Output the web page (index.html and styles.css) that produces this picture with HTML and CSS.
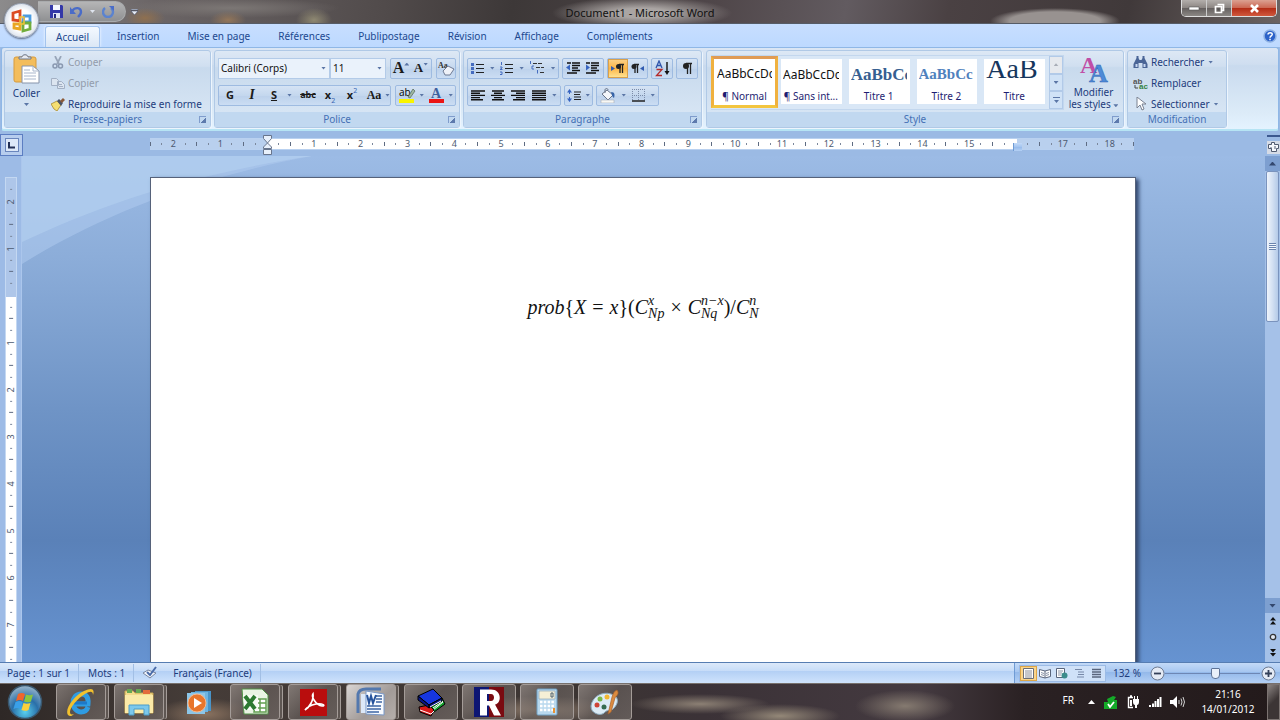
FILE: index.html
```html
<!DOCTYPE html>
<html lang="fr">
<head>
<meta charset="utf-8">
<title>Document1 - Microsoft Word</title>
<link rel="stylesheet" href="styles.css">
</head>
<body>
<header class="titlebar">
  <div class="quick">
    <button class="plain" aria-label="Enregistrer"><svg width="13" height="13" viewBox="0 0 13 13"><path d="M0 0h12l1 1v12H0z" fill="#3438a8"/><path d="M3 0h7v5H3z" fill="#f4f6ff"/><path d="M3 8h7v5H3z" fill="#dfe4f4"/><path d="M4 9h2v4H4z" fill="#222880"/></svg></button>
    <button class="plain" aria-label="Annuler"><svg width="13" height="12" viewBox="0 0 13 12"><path d="M2 5C5 1 11 1 11 6c0 2-1 3-3 5" fill="none" stroke="#4a6cc8" stroke-width="2.4"/><path d="M0 1v7h6z" fill="#4a6cc8"/></svg></button>
    <i class="caret pale"></i>
    <button class="plain" aria-label="Rétablir"><svg width="13" height="12" viewBox="0 0 13 12"><path d="M3 2a5 5 0 1 0 6 0" fill="none" stroke="#5b83cf" stroke-width="2.4"/><path d="M7 0h5v5z" fill="#4a6cc8"/></svg></button>
  </div>
  <button class="plain quick-more" aria-label="Personnaliser"><svg width="7" height="6" viewBox="0 0 7 6"><path d="M0 0h7v1H0zM0 2h7L3.500 6z" fill="#e8edf6" stroke="#333c58" stroke-width=".5"/></svg></button>
  <h1>Document1 - Microsoft Word</h1>
  <div class="window-buttons">
    <button aria-label="Réduire"><svg width="12" height="5" viewBox="0 0 12 5"><path d="M1 1h10v3H1z" fill="#fff" stroke="#555" stroke-width=".6"/></svg></button>
    <button aria-label="Niveau inférieur"><svg width="11" height="11" viewBox="0 0 11 11"><path d="M3.500 1.500h6v6h-2M1.500 3.500h6v6h-6z" fill="none" stroke="#fff" stroke-width="1.700"/><path d="M3.500 5.500h2v2h-2z" fill="#555"/></svg></button>
    <button class="close" aria-label="Fermer"><svg width="11" height="9" viewBox="0 0 11 9"><path d="M2 1l7 7M9 1L2 8" stroke="#fff" stroke-width="2.600"/></svg></button>
  </div>
  <button class="office" aria-label="Bouton Office"><svg width="24" height="24" viewBox="0 0 24 24" fill="none" stroke-width="2.800"><path d="M3 4l7-2v10l-7-1z" stroke="#dc4b22"/><path d="M14 7h6v6h-7z" stroke="#4b9be0"/><path d="M4 15h6v5l-6-1z" stroke="#e9a620"/><path d="M13 14h7v6l-7 2z" stroke="#71ad3d"/><path d="M10 8h4v7h-4z" stroke="#f2c23a" stroke-width="1.500"/></svg></button>
</header>

<nav class="tabs">
  <button class="tab active">Accueil</button><button class="tab">Insertion</button><button class="tab">Mise en page</button><button class="tab">Références</button><button class="tab">Publipostage</button><button class="tab">Révision</button><button class="tab">Affichage</button><button class="tab">Compléments</button>
  <button class="plain help" aria-label="Aide"><svg width="14" height="14" viewBox="0 0 14 14"><circle cx="7" cy="7" r="6" fill="#2c62c9" stroke="#8fb1e2" stroke-width="1.500"/><path d="M5 5.500C5 3 9.500 3 9.200 5.500 9 7 7 7 7 8.800M7 9.800v1.500" fill="none" stroke="#fff" stroke-width="1.500"/></svg></button>
</nav>

<main class="ribbon">
  <section class="group g-clip">
    <div class="body">
      <button class="tool big"><svg width="27" height="30" viewBox="0 0 27 30"><rect x="1" y="3" width="22" height="25" rx="2" fill="#f3bd5c" stroke="#d79b3c"/><path d="M6 5h12V3h-3c0-3-6-3-6 0H6z" fill="#e8ebf1" stroke="#6d7687"/><path d="M9 12h11l6 5v12H9z" fill="#fff" stroke="#8794ab"/><path d="M20 12v5h6M11 16h6M11 19h12M11 22h12M11 25h12" fill="none" stroke="#a9b6cc"/></svg><span>Coller</span><i class="caret"></i></button>
      <div class="stack">
        <button class="tool off"><svg width="14" height="13" viewBox="0 0 14 13"><path d="M4 0l4 8M10 0L6 8" stroke="#98a5b8" stroke-width="1.700"/><circle cx="4" cy="10" r="2" fill="none" stroke="#8998b0" stroke-width="1.500"/><circle cx="9.500" cy="10" r="2" fill="none" stroke="#8998b0" stroke-width="1.500"/></svg>Couper</button>
        <button class="tool off"><svg width="14" height="12" viewBox="0 0 14 12"><path d="M.5 1.500h5l2 2v5h-7zM6.500 4.500h4l3 3v4h-7z" fill="#dce5f0" stroke="#a3b0c4"/><path d="M8 7.500h3M8 9.500h4" stroke="#a3b0c4"/></svg>Copier</button>
        <button class="tool"><svg width="14" height="13" viewBox="0 0 14 13"><path d="M0 6l6-3 4 4-4 6-3-2z" fill="#f5df72" stroke="#a88a2c" stroke-width=".8"/><path d="M6 3l2-2 4 4-2 3z" fill="#4b5466"/><path d="M9 3l3-3 2 2-3 3z" fill="#8b5a38"/></svg>Reproduire la mise en forme</button>
      </div>
    </div>
    <h2>Presse-papiers<i class="launch"></i></h2>
  </section>

  <section class="group g-font">
    <div class="body rows">
      <div class="row">
        <div class="combo"><label class="pick wide"><select aria-label="Police"><option>Calibri (Corps)</option></select><i class="caret"></i></label><label class="pick"><select aria-label="Taille"><option>11</option></select><i class="caret"></i></label></div>
        <div class="set two"><button class="serif f16" aria-label="Agrandir">A<i class="caret up mark"></i></button><button class="serif f13" aria-label="Réduire la police">A<i class="caret mark"></i></button></div>
        <div class="set end"><button aria-label="Effacer la mise en forme"><svg width="18" height="16" viewBox="0 0 18 16"><text x="1" y="8" font-size="8" font-weight="bold" font-family="Liberation Serif" fill="#333">Aa</text><path d="M6 11l5-5 6 3-4 6H8z" fill="#eef1f8" stroke="#6f7b94"/></svg></button></div>
      </div>
      <div class="row">
        <div class="set grow"><button><b>G</b></button><button class="serif"><em>I</em></button><button><u>S</u></button><i class="caret"></i><button class="strike">abc</button><button><b>x</b><sub>2</sub></button><button><b>x</b><sup>2</sup></button><button class="serif aa">Aa</button><i class="caret"></i></div>
        <div class="set end"><button aria-label="Surlignage"><svg width="18" height="18" viewBox="0 0 18 18"><text x="1" y="10" font-size="10" font-family="Open Sans" fill="#000">ab</text><path d="M10 11l5-8 2 2-5 7z" fill="#9eb8a2" stroke="#526454" stroke-width=".7"/><path d="M1 13h15v4H1z" fill="#f9f400"/></svg></button><i class="caret"></i><button aria-label="Couleur de police"><svg width="17" height="18" viewBox="0 0 17 18"><text x="3" y="12" font-size="14" font-weight="bold" font-family="Liberation Serif" fill="#3e619f">A</text><path d="M1 13h15v4H1z" fill="#eb1515"/></svg></button><i class="caret"></i></div>
      </div>
    </div>
    <h2>Police<i class="launch"></i></h2>
  </section>

  <section class="group g-para">
    <div class="body rows">
      <div class="row">
        <div class="set lists"><button aria-label="Puces"><svg width="14" height="13" viewBox="0 0 14 13"><path d="M0 1h3v3H0zM0 5h3v3H0zM0 9h3v3H0z" fill="#456cc0"/><path d="M5 2.500h8M5 6.500h8M5 10.500h8" stroke="#222" stroke-width="1.200"/></svg></button><i class="caret"></i><button aria-label="Numérotation"><svg width="14" height="13" viewBox="0 0 14 13"><path d="M1.500 0v3M0 5h2v1L0 7.500h2.500M0 10h2v2.500H0" fill="none" stroke="#456cc0"/><path d="M5 2.500h8M5 6.500h8M5 10.500h8" stroke="#222" stroke-width="1.200"/></svg></button><i class="caret"></i><button aria-label="Liste à plusieurs niveaux"><svg width="16" height="14" viewBox="0 0 16 14"><path d="M1.500 0v3M5 5h-2v3h2M8.500 9v3.500" fill="none" stroke="#456cc0"/><path d="M4 2.500h10M7 6.500h8M11 11.500h4" stroke="#333" stroke-width="1.200" stroke-dasharray="4 1"/></svg></button><i class="caret"></i></div>
        <div class="set two"><button aria-label="Diminuer le retrait"><svg width="15" height="14" viewBox="0 0 15 14"><path d="M1 2h4M6 2h8M6 4.500h8M6 7h6M6 9.500h8M1 12h10" stroke="#111" stroke-width="1.400"/><path d="M0 6.500l4-3v6z" fill="#3764c0"/></svg></button><button aria-label="Augmenter le retrait"><svg width="15" height="14" viewBox="0 0 15 14"><path d="M1 2h4M6 2h8M6 4.500h8M6 7h6M6 9.500h8M1 12h10" stroke="#111" stroke-width="1.400"/><path d="M5 6.500l-4-3v6z" fill="#3764c0"/></svg></button></div>
        <div class="set two"><button class="lit" aria-label="De gauche à droite"><svg width="13" height="11" viewBox="0 0 13 11"><path d="M0 3v5l4-2.500z" fill="#315bb0"/><path d="M8 1.500H13M9 1v9M11.500 1v9" stroke="#222" stroke-width="1.300"/><circle cx="7.500" cy="3.500" r="2.500" fill="#222"/></svg></button><button aria-label="De droite à gauche"><svg width="13" height="11" viewBox="0 0 13 11"><path d="M13 3v5l-4-2.500z" fill="#315bb0"/><path d="M3 1.500H8M4 1v9M6.500 1v9" stroke="#222" stroke-width="1.300"/><circle cx="3" cy="3.500" r="2.500" fill="#222"/></svg></button></div>
        <div class="set one"><button aria-label="Trier"><svg width="15" height="17" viewBox="0 0 15 17"><path d="M1 8l3-7 3 7M2 5.500h4" fill="none" stroke="#2f55ac" stroke-width="1.300"/><path d="M1.500 9.500H7l-5.500 6H7" fill="none" stroke="#b42b2b" stroke-width="1.300"/><path d="M12 2v11" stroke="#111" stroke-width="1.400"/><path d="M9.500 11h5L12 15z" fill="#111"/></svg></button></div>
        <div class="set one"><button aria-label="Afficher tout"><svg width="11" height="13" viewBox="0 0 11 13"><path d="M4 1.500h6M5.500 1v11M8.500 1v11" stroke="#222" stroke-width="1.300"/><circle cx="4" cy="4" r="3" fill="#222"/></svg></button></div>
      </div>
      <div class="row">
        <div class="set align"><button aria-label="Gauche"><svg width="14" height="11" viewBox="0 0 14 11"><path d="M0 1h14M0 3.200h9M0 5.400h14M0 7.600h9M0 9.800h12" stroke="#111" stroke-width="1.400"/></svg></button><button aria-label="Centrer"><svg width="14" height="11" viewBox="0 0 14 11"><path d="M1 1h12M3 3.200h8M0 5.400h14M3 7.600h8M1 9.800h12" stroke="#111" stroke-width="1.400"/></svg></button><button aria-label="Droite"><svg width="14" height="11" viewBox="0 0 14 11"><path d="M0 1h14M5 3.200h9M0 5.400h14M5 7.600h9M2 9.800h12" stroke="#111" stroke-width="1.400"/></svg></button><button aria-label="Justifier"><svg width="14" height="11" viewBox="0 0 14 11"><path d="M0 1h14M0 3.200h14M0 5.400h14M0 7.600h14M0 9.800h14" stroke="#111" stroke-width="1.400"/></svg></button><i class="caret"></i></div>
        <div class="set inter"><button aria-label="Interligne"><svg width="15" height="15" viewBox="0 0 15 15"><path d="M2.500 2v11" stroke="#3764c0" stroke-dasharray="4 3"/><path d="M0 4.500L2.500 1 5 4.500zM0 10.500L2.500 14 5 10.500z" fill="#3764c0"/><path d="M7 4h7M7 6.500h6M7 9h7M7 11.500h7" stroke="#222" stroke-width="1.200"/></svg></button><i class="caret"></i></div>
        <div class="set shade"><button aria-label="Trame de fond"><svg width="16" height="15" viewBox="0 0 16 15"><path d="M2 6l5-4 6 5-5 5z" fill="#f4f6fa" stroke="#6a7488"/><path d="M5 5V2c0-2 3-2 3 0" fill="none" stroke="#6a7488"/><path d="M11 4c4 0 4 3 3 6-2-1-2-3-3-6" fill="#3764a8"/><path d="M1 12h13v3H1z" fill="#f8f8f4" stroke="#a6adba" stroke-width=".6"/></svg></button><i class="caret"></i><button aria-label="Bordures"><svg width="13" height="13" viewBox="0 0 13 13"><path d="M.5 0v12M12.500 0v12M6.500 0v12M0 .5h13M0 6.500h13" stroke="#7b8ba8" stroke-dasharray="1 1"/><path d="M0 12h13" stroke="#222" stroke-width="1.500"/></svg></button><i class="caret"></i></div>
      </div>
    </div>
    <h2>Paragraphe<i class="launch"></i></h2>
  </section>

  <section class="group g-style">
    <div class="body">
      <div class="gallery">
        <button class="card sel"><span class="sample">AaBbCcDc</span><span>¶ Normal</span></button>
        <button class="card"><span class="sample">AaBbCcDc</span><span>¶ Sans int...</span></button>
        <button class="card"><span class="sample t1">AaBbCc</span><span>Titre 1</span></button>
        <button class="card"><span class="sample t2">AaBbCc</span><span>Titre 2</span></button>
        <button class="card"><span class="sample t0">AaB</span><span>Titre</span></button>
        <div class="scroller"><button class="dim" aria-label="Haut"><i class="caret up"></i></button><button aria-label="Bas"><i class="caret"></i></button><button class="more" aria-label="Autres"><svg width="7" height="6" viewBox="0 0 7 6"><path d="M0 0h7v1H0zM1 3h5L3.500 6z" fill="#5b76a6"/></svg></button></div>
      </div>
      <button class="tool big modify"><svg width="30" height="28" viewBox="0 0 30 28"><text x="1" y="18" font-size="24" font-weight="bold" font-family="Liberation Serif" fill="#c04ea6">A</text><text x="10" y="27" font-size="26" font-weight="bold" font-family="Liberation Serif" fill="#4d8bd8" stroke="#3267b4" stroke-width=".5">A</text></svg><span>Modifier<br>les styles <i class="caret"></i></span></button>
    </div>
    <h2>Style<i class="launch"></i></h2>
  </section>

  <section class="group g-edit">
    <div class="body">
      <div class="stack">
        <button class="tool"><svg width="15" height="12" viewBox="0 0 14 12"><path d="M3 0h2v2l1 2h2l1-2V0h2v2l3 6v4H9V7H5v5H0V8l3-6z" fill="#4a6596"/><path d="M2 8h2v3H2zM10 8h2v3h-2z" fill="#c7d8f1"/></svg>Rechercher<i class="caret"></i></button>
        <button class="tool"><svg width="15" height="14" viewBox="0 0 15 14"><text x="0" y="8" font-size="8" font-weight="bold" font-family="Liberation Sans" fill="#555">ab</text><text x="6" y="13" font-size="8" font-weight="bold" font-family="Liberation Sans" fill="#338244">ac</text><path d="M2 9v3h3" fill="none" stroke="#444"/></svg>Remplacer</button>
        <button class="tool"><svg width="15" height="14" viewBox="0 0 15 14"><path d="M4 0v11l3-3 2 5 2-1-2-5h4z" fill="#fff" stroke="#7a8291"/></svg>Sélectionner<i class="caret"></i></button>
      </div>
    </div>
    <h2>Modification</h2>
  </section>
</main>

<div class="document">
  <button class="corner" aria-label="Tabulation"><span><svg width="7" height="7" viewBox="0 0 7 7"><path d="M1 0v5.500h6" fill="none" stroke="#222f55" stroke-width="2"/></svg></span></button>
  <div class="hband">
    <div class="hruler"><ol id="hmarks"></ol>
      <svg class="indent left" width="9" height="20" viewBox="0 0 9 20"><path d="M.5.500h8v3L4.500 8l-4-4.500zM4.500 8l4 4v1.500h-8V12z" fill="#e8f0fb" stroke="#68758c"/><path d="M.5 14.500h8v5h-8z" fill="#e8f0fb" stroke="#68758c"/></svg>
      <svg class="indent right" width="9" height="8" viewBox="0 0 9 8"><path d="M4.500.500l4 4v3h-8v-3z" fill="#dfe9f7" stroke="#68758c"/></svg>
    </div>
  </div>
  <div class="ruler-toggle"><button class="plain" aria-label="Règle"><svg width="13" height="13" viewBox="0 0 13 13"><path d="M0 0h13v13H0z" fill="#d5dbe6"/><path d="M1.500 3.500h3v-2h3v2h4v4h-2v3h-5v-3h-3z" fill="#f6f8fc" stroke="#505b70"/><path d="M4 6v2M8 5v3" stroke="#505b70"/></svg></button></div>
  <div class="vband"><div class="vruler"><ol id="vmarks"></ol></div></div>
  <div class="canvas">
    <svg class="wave" width="290" height="110" viewBox="0 0 290 110"><path d="M0 0H290C180 20 80 58 0 108z" fill="#aecbee" opacity=".55"/><path d="M0 0H290C170 18 80 48 0 86z" fill="#b4d0f0" opacity=".6"/></svg>
    <article class="page">
      <p class="formula"><i>prob</i><span>{</span><i>X</i><span class="op">=</span><i>x</i><span>}(</span><i>C</i><span class="scripts"><i>x</i><i>Np</i></span><span class="op">×</span><i>C</i><span class="scripts"><i>n−x</i><i>Nq</i></span><span>)/</span><i>C</i><span class="scripts"><i>n</i><i>N</i></span></p>
    </article>
  </div>
  <div class="vscroll">
    <button class="arrow" aria-label="Défiler vers le haut"><i class="caret up"></i></button>
    <div class="track"><div class="thumb"><i></i></div></div>
    <button class="arrow" aria-label="Défiler vers le bas"><i class="caret"></i></button>
    <div class="browse"><button class="plain" aria-label="Page précédente"><svg width="6" height="8" viewBox="0 0 6 8"><path d="M0 3.500L3 0l3 3.500zM0 7.500L3 4l3 3.500z" fill="#111"/></svg></button><button class="plain" aria-label="Objet"><svg width="8" height="8" viewBox="0 0 8 8"><circle cx="4" cy="4" r="2.700" fill="#dfe6f0" stroke="#333" stroke-width="1.300"/></svg></button><button class="plain" aria-label="Page suivante"><svg width="6" height="8" viewBox="0 0 6 8"><path d="M0 0h6L3 3.500zM0 4h6L3 7.500z" fill="#111"/></svg></button></div>
  </div>
</div>

<footer class="status">
  <span class="s1">Page : 1 sur 1</span><span class="s2">Mots : 1</span>
  <span class="s3"><svg width="16" height="13" viewBox="0 0 16 13"><path d="M1 7l5-3 8 3-6 5z" fill="#f3f6fb" stroke="#7986a0"/><path d="M5 6l3 3 6-8" fill="none" stroke="#4a6ba8" stroke-width="2"/></svg></span><span class="s4">Français (France)</span>
  <div class="right">
    <div class="views">
      <button class="on" aria-label="Page"><svg width="11" height="11" viewBox="0 0 11 11"><path d="M.5.500h10v10H.5z" fill="#fff" stroke="#6b6f76"/><path d="M2 3h7M2 5h7M2 7h7M2 9h7" stroke="#8b8f98"/></svg></button>
      <button aria-label="Lecture"><svg width="12" height="11" viewBox="0 0 12 11"><path d="M.5 1.500L6 3l5.500-1.500v7L6 10 .5 8.500zM6 3v7" fill="#fff" stroke="#59657c"/><path d="M2 4.500l3 1M2 6.500l3 1M10 4.500l-3 1M10 6.500l-3 1" stroke="#8b95a8"/></svg></button>
      <button aria-label="Web"><svg width="12" height="11" viewBox="0 0 12 11"><path d="M.5.500h8v9h-8z" fill="#fff" stroke="#59657c"/><path d="M2 3h5M2 5h4M2 7h3" stroke="#8b95a8"/><circle cx="8.500" cy="7.500" r="3" fill="#3c8c8c"/></svg></button>
      <button aria-label="Plan"><svg width="11" height="11" viewBox="0 0 11 11"><path d="M1 1.500h7M4 4h6M4 6.500h6M3 9h7" stroke="#7688a8" stroke-width="1.200"/></svg></button>
      <button aria-label="Brouillon"><svg width="11" height="11" viewBox="0 0 11 11"><path d="M1 1.500h9M1 4h9M1 6.500h9M1 9h9" stroke="#59657c" stroke-width="1.300"/></svg></button>
    </div>
    <span class="pct">132 %</span>
    <button class="plain zoom" aria-label="Zoom arrière"><svg width="15" height="15" viewBox="0 0 15 15"><circle cx="7.500" cy="7.500" r="6.500" fill="#e4eaf4" stroke="#6e7b92"/><path d="M4 7.500h7" stroke="#333f58" stroke-width="1.800"/></svg></button>
    <input type="range" min="0" max="100" value="54" aria-label="Zoom">
    <button class="plain zoom" aria-label="Zoom avant"><svg width="15" height="15" viewBox="0 0 15 15"><circle cx="7.500" cy="7.500" r="6.500" fill="#e4eaf4" stroke="#6e7b92"/><path d="M4 7.500h7M7.500 4v7" stroke="#333f58" stroke-width="1.800"/></svg></button>
  </div>
</footer>

<footer class="taskbar">
  <button class="start" aria-label="Démarrer"><svg width="36" height="36" viewBox="0 0 36 36"><defs><radialGradient id="orb" cx=".5" cy=".8" r=".8"><stop offset="0" stop-color="#58d0f0"/><stop offset=".5" stop-color="#2a6fa8"/><stop offset="1" stop-color="#9db8cc"/></radialGradient></defs><circle cx="18" cy="18" r="16.500" fill="url(#orb)" stroke="#39566c" stroke-width="1.500"/><path d="M11 10c3-1.500 5-1 7 0l-2 7c-2-1.500-4-1.500-7 0z" fill="#f0652c"/><path d="M19 10.500c2 1 4.500 1 7 0l-2 7c-2.500 1.200-5 1-7 0z" fill="#8cc63e"/><path d="M8.500 18c3-1.500 5-1 7 0l-2 7c-2-1.500-4-1.500-7 0z" fill="#3aa0e8"/><path d="M16.500 19c2 1 4.500 1 7 0l-2 7c-2.500 1.200-5 1-7 0z" fill="#fbd03c"/></svg></button>
  <div class="apps">
    <button class="app many" aria-label="Internet Explorer"><svg width="32" height="32" viewBox="0 0 32 32"><path d="M8 18h15c1-8-3-10-7-10-5 0-8 4-8 9s4 9 8 9c4 0 6-2 7-5" fill="none" stroke="#2f9ce2" stroke-width="5"/><path d="M9 17h13" stroke="#1e78c8" stroke-width="3"/><path d="M3 29C-1 23 10 9 19 5c8-4 11-2 9 4 0-4-3-4-8-1C13 12 5 21 5 26c0 2 1 3 4 2-2 2-4 3-6 1" fill="#f2c12e"/></svg></button>
    <button class="app many" aria-label="Explorateur"><svg width="32" height="30" viewBox="0 0 32 30"><path d="M2 4h8l2 2h18v20H2z" fill="#f4dc8c" stroke="#c9a850"/><path d="M4 2h5v4H4zM13 2h5v4h-5z" fill="#68a854"/><path d="M20 3h7v4h-7z" fill="#e36b3d"/><path d="M2 8h28v18H2z" fill="#fbeaa8"/><path d="M6 28V18h20v10h-5v-6H11v6z" fill="#7cc8ec" stroke="#4c9cc8"/></svg></button>
    <button class="app bare" aria-label="Lecteur multimédia"><svg width="28" height="26" viewBox="0 0 28 26"><path d="M10 2h16v20H10z" fill="#4994c8"/><path d="M6 3h17v20H6z" fill="#6eb4e0"/><path d="M2 4h18v21H2z" fill="#8cc6e8"/><circle cx="12" cy="14" r="9" fill="#e8762c" stroke="#f9b88c"/><path d="M9 9v10l8-5z" fill="#fff"/></svg></button>
    <button class="app many" aria-label="Excel"><svg width="30" height="30" viewBox="0 0 30 30"><path d="M2 2h20l6 6v19H4z" fill="#eaf4e4" stroke="#539448"/><path d="M16 12h10v13H14zM16 16h10M16 21h10M20 12v13" fill="#fff" stroke="#63a052" stroke-width="1.500"/><path d="M3 8h15v15H4z" fill="#f7fbf4"/><path d="M5 9l10 13M15 9L5 22" stroke="#2d7a31" stroke-width="4"/></svg></button>
    <button class="app many" aria-label="Acrobat"><svg width="27" height="27" viewBox="0 0 27 27"><path d="M0 0h27v27H0z" fill="#b90d0d"/><path d="M5 21c4-2 9-10 8-16-2 3 3 11 9 12 4 0 1-3-6-2-5 1-9 3-11 6" fill="none" stroke="#fff" stroke-width="1.700"/></svg></button>
    <button class="app many current" aria-label="Word"><svg width="30" height="30" viewBox="0 0 30 30"><path d="M2 26V7c1-4 4-5 8-5h15" fill="none" stroke="#5378ae" stroke-width="3"/><path d="M5 7h20v19H5z" fill="#dce8f8"/><path d="M10 4l18 3v21l-18-1z" fill="#f8fbff" stroke="#7998c8"/><path d="M20 9h6M20 12h6M20 15h6M11 19h14M11 22h14M11 25h12" stroke="#3d65a4" stroke-width="1.600"/><path d="M11 8l2 8 2-7 2 7 3-8" fill="none" stroke="#26539c" stroke-width="2"/></svg></button>
    <button class="app" aria-label="Livres"><svg width="30" height="30" viewBox="0 0 30 30"><path d="M14 20L26 11l3 6-11 8z" fill="#12a32c" stroke="#000"/><path d="M17 23l10-8M17 21l10-7" stroke="#fff"/><path d="M3 20l10-2 5 5-3 6L4 25z" fill="#d81a1a" stroke="#000"/><path d="M4 23l11 4 3-3" stroke="#fff" fill="none"/><path d="M2 9L17 2l9 9-13 7z" fill="#1636e0" stroke="#000"/><path d="M2 9v4l11 8v-3zM13 18l13-7v3l-13 7z" fill="#0a1688" stroke="#000"/><path d="M14 20l11-6" stroke="#fff"/></svg></button>
    <button class="app" aria-label="R"><svg width="30" height="30" viewBox="0 0 30 30"><path d="M0 0h15v30H0z" fill="#0d1673"/><path d="M15 0h15v30H15z" fill="#7a0a10"/><path d="M6 2.500h11c11 0 11 14 4 15l6 11h-7l-5-10h-2v10H6zM13 7v7h4c4 0 4-7 0-7z" fill="#fff" fill-rule="evenodd"/></svg></button>
    <button class="app" aria-label="Calculatrice"><svg width="22" height="28" viewBox="0 0 22 28"><rect x="1" y="1" width="20" height="26" rx="1" fill="#b8d8ee" stroke="#6ea0c4"/><path d="M3 3h16v8H3z" fill="#f5efd6" stroke="#92aab8" stroke-width=".7"/><path d="M15 5h2v4h-2z" fill="none" stroke="#4c6070"/><path d="M4 14h14M4 18h14M4 22h14" stroke="#fff" stroke-width="2.500" stroke-dasharray="2.500 1.300"/><path d="M17 20h2v5h-2z" fill="#e89132"/></svg></button>
    <button class="app" aria-label="Paint"><svg width="31" height="30" viewBox="0 0 31 30"><path d="M1 19C2 10 12 4 21 7c8 2 8 9 3 14-3 4-6 1-9 4-2 3-7 3-10 1-2-1-4-3-4-7" fill="#dcebf5" stroke="#8baabd"/><circle cx="7" cy="18" r="2.500" fill="#cf4536"/><circle cx="10" cy="12" r="2.500" fill="#7ab648"/><circle cx="17" cy="10" r="2.500" fill="#f2b632"/><circle cx="14" cy="20" r="2.500" fill="#356b4f"/><path d="M27 3c3 4-1 6-2 8l-4 14-3 2 4-17c1-3 2-6 5-7" fill="#db8b3f" stroke="#a9622c" stroke-width=".7"/></svg></button>
  </div>
  <div class="tray">
    <span class="lang">FR</span>
    <i class="caret up"></i>
    <svg width="15" height="15" viewBox="0 0 15 15"><path d="M4 4l6-3 3 1-2 3h3v9H1V7h4z" fill="#14a928"/><path d="M5 9l2 3 4-5" fill="none" stroke="#fff" stroke-width="1.800"/></svg>
    <svg width="14" height="14" viewBox="0 0 14 14"><path d="M7 2.500H2.500v10H7M4 1h2" fill="none" stroke="#fff" stroke-width="1.400"/><path d="M4 5h2v6H4zM7 4h6v3c0 2-1 3-2 3v3H9v-3C8 10 7 9 7 7zM8 1h1v3H8zM11 1h1v3h-1z" fill="#fff"/></svg>
    <svg width="14" height="12" viewBox="0 0 14 12"><path d="M1 9h2v2H1zM4 7.500h2V11H4zM6.500 5h2v6h-2zM9 3h2v8H9zM11.500 1h2v10h-2z" fill="#fff"/></svg>
    <svg width="15" height="12" viewBox="0 0 15 12"><path d="M0 4h3l4-4v12L3 8H0z" fill="#fff"/><path d="M9 4v4M11 2.500q2 3.500 0 7M13 1q3 5 0 10" fill="none" stroke="#d2d2d2"/></svg>
    <div class="clock"><time>21:16</time><time>14/01/2012</time></div>
    <button class="desktop" aria-label="Bureau"></button>
  </div>
</footer>
<script src="rulers.js"></script>
</body>
</html>
```
FILE: rulers.js
```js
// Fills a ruler with quarter-centimetre marks; whole centimetres carry their number.
function fill(id, from, to, hidden) {
  const list = document.getElementById(id);
  for (let q = from; q <= to; q++) {
    const mark = document.createElement('li');
    if (q % 4 === 0) {
      const n = Math.abs(q / 4);
      if (!hidden.includes(n)) mark.textContent = n;
    } else {
      mark.className = q % 2 === 0 ? 'tick' : 'dot';
    }
    list.appendChild(mark);
  }
}
fill('hmarks', -10, 74, [0, 16]);
fill('vmarks', -9, 60, [0]);
```
FILE: styles.css
```css
* { box-sizing: border-box; }
body {
  margin: 0; height: 100vh; overflow: hidden; display: flex; flex-direction: column;
  font: 10px/14px "Noto Sans", "Open Sans", sans-serif; color: #1d3c7c; background: #9bbae4;
}
button { font: inherit; color: inherit; border: 0; background: none; padding: 0; display: flex; align-items: center; justify-content: center; }
svg { display: block; flex: none; }
h1, h2, p, ol { margin: 0; padding: 0; font-weight: normal; }
ol { list-style: none; }
.caret { display: inline-block; flex: none; width: 5px; height: 3px; background: #5b76a6; clip-path: polygon(0 0, 100% 0, 50% 100%); }
.caret.up { clip-path: polygon(0 100%, 100% 100%, 50% 0); }
.caret.pale { background: #dfe5ef; }

.titlebar {
  position: relative; z-index: 2; flex: none; height: 24px; display: flex; align-items: flex-start; border-bottom: 1px solid #565c66;
  background:
    radial-gradient(ellipse 20px 10px at 145px 18px, #8f7050, transparent),
    radial-gradient(ellipse 18px 9px at 228px 20px, #93765a, transparent),
    radial-gradient(ellipse 18px 12px at 314px 20px, #8f8972, transparent),
    radial-gradient(ellipse 110px 10px at 230px 8px, #7c7775, transparent),
    radial-gradient(closest-side, #989290 70%, transparent) 990px 8px / 130px 26px no-repeat,
    radial-gradient(ellipse 90px 16px at 642px 13px, #aaa5a3 30%, transparent),
    linear-gradient(100deg, #8c8b8c, #6b6566 12%, #514b4b 30%, #3d3838 40%, #50474a 56%, #625b60 66%, #4a4143 74%, #40393a 88%, #6b6362);
}
.quick { display: flex; align-items: center; gap: 7px; height: 21px; margin: 1px 0 0 38px; padding: 0 10px 0 12px; border: 1px solid #a9abad; border-left: 0; border-radius: 0 11px 11px 0; background: linear-gradient(#b5b5b6, #8f9092); }
.quick-more { margin: 9px 0 0 5px; }
.titlebar h1 { position: absolute; left: 0; right: 0; top: 5px; text-align: center; font-size: 11px; line-height: 16px; color: #111; pointer-events: none; }
.window-buttons { display: flex; margin: 0 3px 0 auto; height: 17px; border: 1px solid #ddd; border-top: 0; border-radius: 0 0 5px 5px; overflow: hidden; }
.window-buttons button { width: 25px; border-right: 1px solid #ccc; background: linear-gradient(#b3aeab, #8b8582 50%, #65605f 52%, #8b8784); }
.window-buttons .close { width: 44px; border: 0; background: linear-gradient(#dba091, #cb6550 50%, #b32c16 52%, #d1583c); }
.office { position: absolute; left: 4px; top: 3px; width: 35px; height: 35px; border-radius: 50%; border: 1px solid #9da7b8; background: radial-gradient(circle, #fff 45%, #dfe5ee 70%, #b7c2d1); box-shadow: 0 1px 2px #5a6780; }

.tabs { flex: none; height: 23px; display: flex; align-items: flex-end; padding-left: 45px; background: linear-gradient(#c7deff, #bdd9ff); }
.tab { height: 21px; padding: 0 14px 1px; font-size: 10px; color: #20488f; }
.tab.active { padding: 0 10px 1px; margin-right: 3px; border: 1px solid #a4c4ee; border-bottom: 0; border-radius: 3px 3px 0 0; background: linear-gradient(#f4f9ff, #dbe7f5); box-shadow: 0 0 3px #fff; }
.help { margin: 0 3px 4px auto; }

.ribbon { flex: none; height: 84px; margin: 0 1px; padding: 2px 2px 1px; display: flex; gap: 3px; border: 1px solid #8fb7e6; border-bottom: 2px solid #b6e4f4; border-radius: 3px; background: linear-gradient(#dbe6f4, #cfdef0 20%, #c9daee 22%, #dcebf8 80%, #e4f3ff); }
.group { display: flex; flex-direction: column; border: 1px solid #b0c9e6; border-radius: 3px; box-shadow: 1px 1px 0 #edf5fd; background: linear-gradient(#dde8f5, #d0dff0 20%, #c8daed 22%, #dbe8f6); }
.group h2 { position: relative; height: 15px; font-size: 10px; line-height: 15px; text-align: center; color: #4571b5; background: #c1d8f0; }
.launch { position: absolute; right: 4px; top: 4px; width: 7px; height: 7px; border: 1px solid #7f9ccc; border-width: 1px 0 0 1px; background: linear-gradient(135deg, transparent 55%, #5d7aad 55%); }
.body { flex: 1; min-height: 0; display: flex; }
.rows { flex-direction: column; justify-content: center; gap: 6px; padding: 0 3px; }
.row { display: flex; gap: 4px; }
.g-clip { width: 207px; }
.g-font { width: 246px; }
.g-para { width: 239px; }
.g-style { width: 418px; margin-left: 1px; }
.g-edit { width: 100px; }
.tool { gap: 3px; justify-content: flex-start; white-space: nowrap; }
.tool .caret { margin-left: 1px; }
.tool.off { color: #929cab; }
.big { flex-direction: column; width: 43px; gap: 3px; padding-top: 3px; line-height: 12px; }
.big .caret { margin: 1px 0 0; }
.big.modify { flex: 1; padding-top: 4px; }
.big.modify .caret { vertical-align: middle; }
.stack { display: flex; flex-direction: column; gap: 5px; padding: 3px 0 0 3px; }
.stack .tool { height: 16px; }
.g-edit .stack { padding-left: 5px; }

.combo { display: flex; width: 168px; }
.pick { position: relative; flex: 1; }
.pick.wide { flex: 2; }
.pick select { width: 100%; height: 21px; appearance: none; border: 1px solid #b3cbe8; border-radius: 0; background: #eaf2fb; font: inherit; color: #111; padding: 0 2px; }
.pick .caret { position: absolute; right: 4px; top: 9px; }
.set { display: flex; align-items: center; justify-content: space-around; height: 21px; border: 1px solid #9ebbe1; border-radius: 2px; background: linear-gradient(#d5e3f4, #c4d7ee 50%, #bcd1eb 52%, #cbddf3); color: #1b1b1b; }
.set button { height: 19px; }
.set.two { width: 42px; }
.set.two button { flex: 1; }
.set.one { width: 22px; }
.set.grow { width: 173px; justify-content: flex-start; }
.set.grow button { width: 22px; }
.set.grow .caret { margin: 0 5px 0 2px; }
.set.grow .caret:last-child { margin: 0; }
.set.end { flex: 1; }
.set.lists { width: 93px; }
.set.align { width: 94px; }
.set.inter { width: 29px; }
.set.shade { width: 63px; }
.set sup, .set sub { font-size: 7px; line-height: 9px; color: #3563b0; }
.set sup { align-self: flex-start; }
.set sub { align-self: flex-end; }
.mark { align-self: flex-start; margin-top: 4px; }
.serif { font-family: "Liberation Serif", serif; font-weight: bold; font-size: 14px; }
.serif.f16 { font-size: 16px; }
.serif.f13 { font-size: 13px; }
.serif.aa { font-size: 12px; }
.set b, .set u { font-size: 11px; font-weight: bold; }
.strike { font-weight: bold; font-size: 9px; text-decoration: line-through; }
.g-para .row { gap: 3px; }
.lit { background: linear-gradient(#fbd28b, #fdb545 50%, #fee79a); box-shadow: inset 0 0 0 1px #d9a04b; }

.gallery { display: flex; margin: 4px 0 0 4px; height: 55px; width: 353px; border: 1px solid #c3d7ee; border-left: 0; background: #d9e7f6; }
.card { flex: 1; margin: 3px 4px 5px 3px; flex-direction: column; justify-content: space-between; background: #fff; padding: 2px 3px 1px 2px; overflow: hidden; white-space: nowrap; color: #1e1e72; min-width: 0; }
.card.sel { margin: 0; height: 52px; flex: 0 0 67px; border: 3px solid #f0b750; border-color: #df9b56 #f0b13f #f3c53f; padding: 1px 3px 2px; }
.sample { width: 100%; height: 27px; line-height: 27px; overflow: hidden; font-size: 12px; color: #111; text-align: left; }
.sample.t1, .sample.t2 { font: bold 17px/27px "Liberation Serif", serif; color: #365f91; }
.sample.t2 { color: #4f81bd; font-size: 15px; }
.sample.t0 { font: 28px/16px "Liberation Serif", serif; color: #17365d; }
.scroller { width: 14px; display: flex; flex-direction: column; }
.scroller button { flex: 1; border: 1px solid #b2cae8; background: #d0e2f6; }
.scroller .dim { background: #e6e9ee; }
.scroller .dim .caret { background: #a8adb7; }

.document { flex: 1; min-height: 0; display: grid; grid-template-columns: 22px 1fr 15px; grid-template-rows: 25px 1fr; }
.corner { margin: 3px 0 0; height: 22px; width: 23px; border: 1px solid #5c7ec2; background: #b7cdee; }
.corner span { display: flex; align-items: center; justify-content: center; width: 14px; height: 14px; border: 1px solid #6a86bd; background: #dde8f8; }
.hband { padding: 7px 131px 0 128px; }
.hruler { position: relative; height: 12px; border: solid #b9d1f0; border-width: 1px 0; background: linear-gradient(90deg, #b9d0ee 11.9%, #fff 11.9% 88.1%, #b9d0ee 88.1%); }
#hmarks { display: flex; justify-content: space-between; align-items: center; height: 10px; font-size: 9px; color: #4d5a70; }
#hmarks li { width: 0; display: flex; justify-content: center; }
.tick::before { content: ""; flex: none; width: 1px; height: 4px; background: #5f6c82; }
.dot::before { content: ""; flex: none; width: 1px; height: 2px; background: #7b879b; }
.indent { position: absolute; }
.indent.left { left: 11.9%; top: -4px; margin-left: -4px; }
.indent.right { left: 88.1%; top: 4px; margin-left: -4px; }
.ruler-toggle { border-top: 2px solid #3b588f; margin: 4px 0 0 2px; padding-top: 2px; display: flex; align-items: center; justify-content: center; }
.vband { padding: 21px 4px 0 5px; overflow: hidden; background: #9dbbe6; border-right: 1px solid #abc6ec; }
.vruler { height: 900px; padding-top: 6px; border: solid #c4d8f2; border-width: 1px 1px 0; background: linear-gradient(#aec6e9 119px, #fff 119px); }
#vmarks { font-size: 9px; color: #4d5a70; }
#vmarks li { height: calc(47px / 4); display: flex; align-items: center; justify-content: center; transform: rotate(-90deg); }
.canvas { position: relative; min-width: 0; overflow: hidden; padding: 21px 129px 0 128px; background: linear-gradient(#9cbbe5, #8cadd9 20%, #6f94c6 50%, #5a81b8 76%, #6693d1); }
.wave { position: absolute; left: 0; top: 0; }
.page { position: relative; height: 1390px; background: #fff; border: 1px solid #56627a; box-shadow: 3px 2px 4px #33486f; padding-top: 115px; }
.formula { display: flex; justify-content: center; align-items: center; font: 20px/28px "Liberation Serif", serif; color: #111; }
.formula .op { margin: 0 6px; }
.scripts { display: inline-grid; font-size: 14px; line-height: 13px; }

.vscroll { display: flex; flex-direction: column; background: #8eb0de; }
.arrow { flex: none; height: 15px; background: #7d9fd0; }
.arrow .caret { width: 7px; height: 4px; background: #33486f; }
.track { flex: 1; background: #a5c1e8; }
.thumb { height: 151px; margin: 0 1px; border: 1px solid #7a93bd; border-radius: 2px; background: linear-gradient(90deg, #eef4fc, #d3e0f2 50%, #b4cae8); display: flex; align-items: center; justify-content: center; }
.thumb i { width: 7px; height: 7px; background: repeating-linear-gradient(#6b84ae 0 1px, #f2f7fd 1px 2px); }
.browse { flex: none; height: 49px; padding: 4px 0 5px; background: #a5c1e8; display: flex; flex-direction: column; justify-content: space-between; align-items: center; }

.status { flex: none; height: 21px; display: flex; align-items: center; border-top: 1px solid #567db2; background: linear-gradient(#dce9fa, #c6dcf8 40%, #b4d0f5 42%, #cfe3fc); color: #1d3c7c; white-space: nowrap; }
.status span { height: 18px; line-height: 18px; padding: 0 8px; border-right: 1px solid #a2bfe5; }
.status .s1 { padding-left: 7px; }
.status .s2 { padding-left: 9px; }
.status .s3 { border: 0; padding-top: 2px; }
.status .s4 { padding-left: 7px; }
.right { margin-left: auto; align-self: stretch; display: flex; align-items: center; padding: 0 4px; border-left: 1px solid #6f9bd4; background: linear-gradient(#c3daf8, #a6c6f0 45%, #94b9ea 47%, #b4d0f5); }
.views { display: flex; border: 1px solid #9cbbe5; background: #cfe1f8; }
.views button { width: 17px; height: 15px; }
.views .on { background: #fbd58a; box-shadow: inset 0 0 0 1px #dca648; }
.status .pct { border: 0; padding: 0 8px 0 7px; }
.status input { appearance: none; width: 95px; height: 14px; margin: 0; background: linear-gradient(#6d87b4, #6d87b4) center / 100% 1px no-repeat; }
.status input::-webkit-slider-thumb { appearance: none; width: 9px; height: 11px; background: #e9f0fa; border: 1px solid #5d7397; border-radius: 1px 1px 4px 4px; }
.zoom { width: 16px; }

.taskbar {
  flex: none; height: 37px; display: flex; align-items: stretch; color: #fff; border-top: 1px solid #77706c;
  background:
    radial-gradient(ellipse 50px 16px at 205px 30px, #8b7360, transparent),
    radial-gradient(ellipse 80px 14px at 540px 26px, #8a7768, transparent),
    radial-gradient(ellipse 70px 10px at 700px 20px, #8c8074, transparent),
    radial-gradient(ellipse 60px 12px at 780px 32px, #948878, transparent),
    radial-gradient(ellipse 50px 16px at 905px 22px, #857a70, transparent),
    linear-gradient(90deg, #2e2826, #453c38 15%, #3c3533 45%, #3b3237 55%, #443a40 72%, #2a2123 80%, #231a1b);
}
.start { width: 36px; margin-left: 7px; }
.apps { display: flex; gap: 4px; margin-left: 13px; }
.app { width: 54px; border: 1px solid #a49c98; border-radius: 3px; background: linear-gradient(135deg, #aaa19c99, #6d656299 50%, #7d757199); }
.app.many { width: 50px; margin-right: 4px; box-shadow: 3px 0 0 -1px #5e5652, 4px 0 0 -1px #a49c98; }
.app.bare { border-color: transparent; background: none; }
.app.current { background: linear-gradient(135deg, #d9d5d3, #a19a97 60%, #b5afac); }
.tray { margin-left: auto; display: flex; align-items: center; gap: 8px; }
.tray .caret { width: 7px; height: 4px; background: #fff; }
.lang { margin: -4px 6px 0 0; }
.clock { display: flex; flex-direction: column; align-items: center; width: 62px; margin-left: 4px; font-size: 10px; line-height: 15px; }
.desktop { align-self: stretch; width: 13px; border: 1px solid #7c7472; background: linear-gradient(135deg, #8b8482, #3c3535 50%); }
```
